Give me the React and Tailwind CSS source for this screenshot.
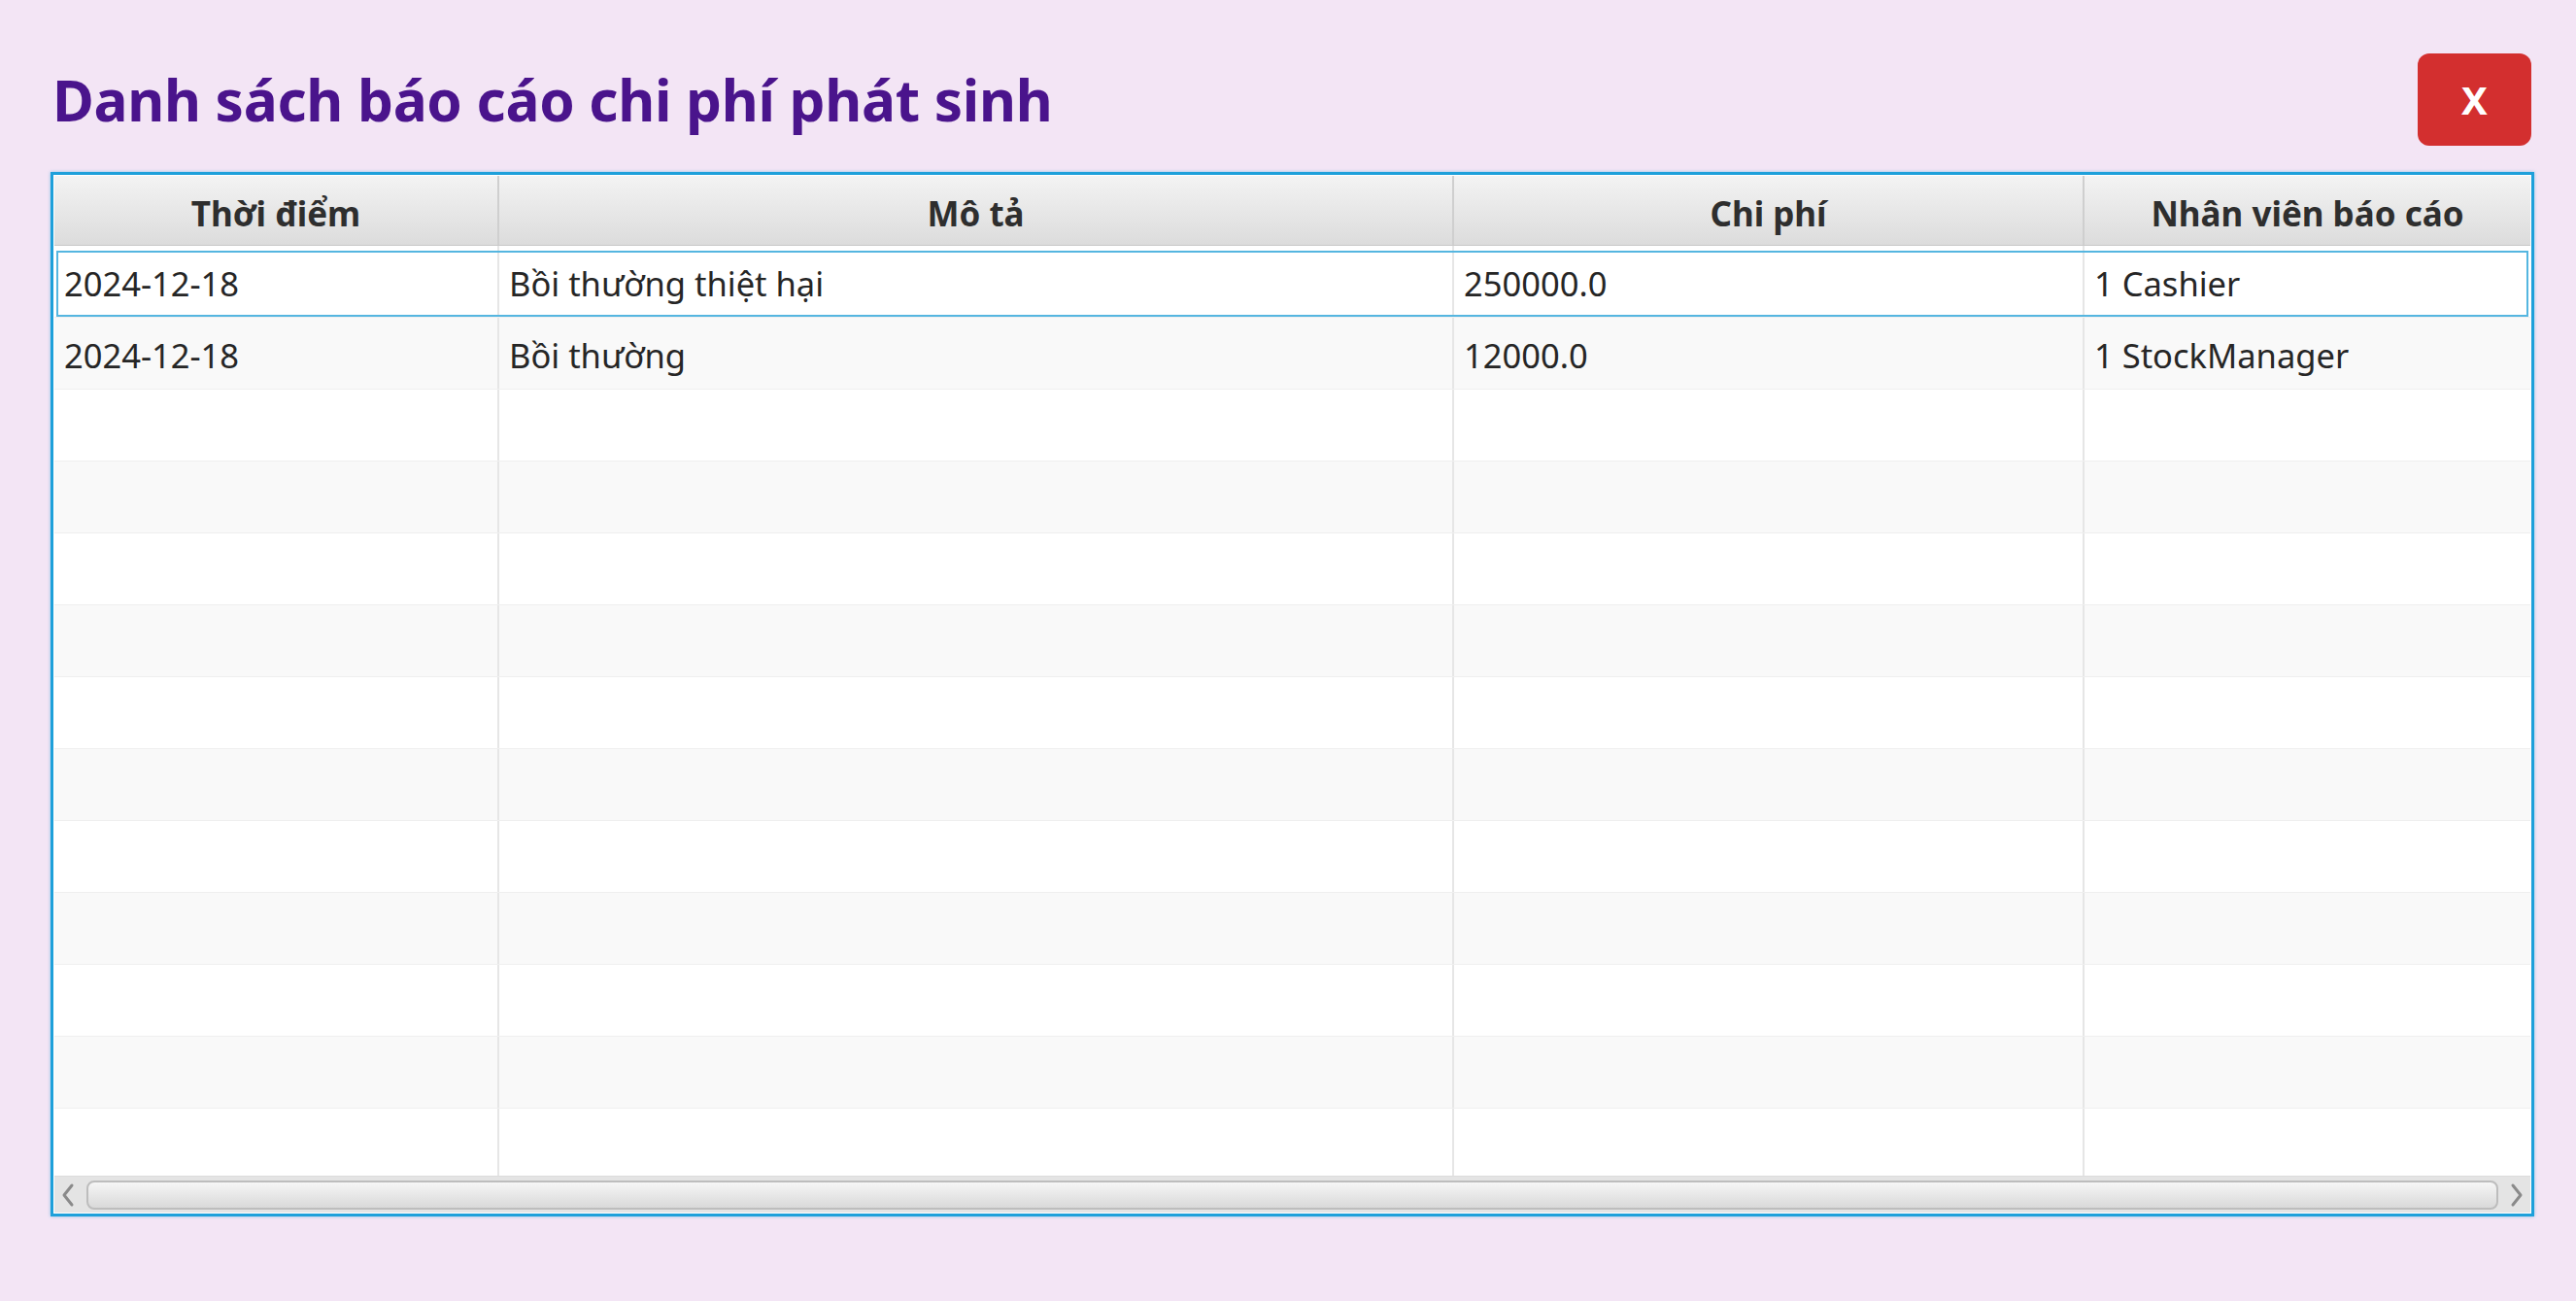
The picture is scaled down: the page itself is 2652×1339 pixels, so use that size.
import React from "react";

const cols = [
  { w: "w-[458px]", title: "Thời điểm" },
  { w: "w-[983px]", title: "Mô tả" },
  { w: "w-[649px]", title: "Chi phí" },
  { w: "flex-1", title: "Nhân viên báo cáo" },
];

const data = [
  ["2024-12-18", "Bồi thường thiệt hại", "250000.0", "1 Cashier"],
  ["2024-12-18", "Bồi thường", "12000.0", "1 StockManager"],
];

export default function App() {
  const rows = Array.from({ length: 13 }, (_, i) => data[i] || null);
  return (
    <div
      className="w-[2652px] h-[1339px] bg-[#f3e5f5] pl-[52px] pr-[43px] pt-[55px]"
      style={{ fontFamily: '"Noto Sans", "Open Sans", sans-serif' }}
    >
      <div className="flex items-center justify-between h-[95px]">
        <h1 className="text-[58.5px] font-bold text-[#4a148c] leading-none pl-[2px] tracking-[-0.3px]">
          Danh sách báo cáo chi phí phát sinh
        </h1>
        <button className="w-[117px] h-[95px] rounded-[12px] bg-[#d32f2f] text-white text-[40px] font-bold flex items-center justify-center mr-[3px]">
          X
        </button>
      </div>

      <div className="mt-[27px] h-[1075px] border-[3px] border-[#1ea0da] bg-white p-px flex flex-col shadow-[0_0_3px_rgba(30,160,218,0.5)]">
        {/* header */}
        <div className="flex h-[72px] border-b border-[#c9c9c9] bg-gradient-to-b from-[#f3f3f3] to-[#dcdcdc]">
          {cols.map((c, i) => (
            <div
              key={i}
              className={`${c.w} flex items-center justify-center pt-[7px] text-[35px] font-bold text-[#2e2e2e] ${
                i < 3 ? "border-r-2 border-[#cfcfcf]" : ""
              }`}
            >
              {c.title}
            </div>
          ))}
        </div>

        {/* body */}
        <div className="flex-1 overflow-hidden">
          {rows.map((r, i) => (
            <div
              key={i}
              className={`relative flex h-[74px] border-b border-[#efefef] ${
                i % 2 === 0 ? "bg-white" : "bg-[#f9f9f9]"
              }`}
            >
              {cols.map((c, j) => (
                <div
                  key={j}
                  className={`${c.w} flex items-center pl-[10px] pt-[4px] text-[34.5px] text-[#262626] ${
                    j < 3 ? "border-r-2 border-[#e6e6e6]" : ""
                  }`}
                >
                  {r ? r[j] : ""}
                </div>
              ))}
              {i === 0 && (
                <div className="absolute left-[2px] right-[2px] top-[5px] bottom-0 border-2 border-[#55b6e0] pointer-events-none" />
              )}
            </div>
          ))}
        </div>

        {/* horizontal scrollbar */}
        <div className="h-[38px] bg-[#e4e4e4] flex items-center px-[3px] gap-[8px] border-t border-[#dcdcdc]">
          <svg width="22" height="28" viewBox="0 0 22 28" className="shrink-0">
            <path d="M15 4 L7 14 L15 24" fill="none" stroke="#8a8a8a" strokeWidth="3" strokeLinecap="round" strokeLinejoin="round" />
          </svg>
          <div className="flex-1 h-[30px] rounded-[8px] border-2 border-[#bdbdbd] bg-gradient-to-b from-[#f6f6f6] to-[#d9d9d9]" />
          <svg width="22" height="28" viewBox="0 0 22 28" className="shrink-0">
            <path d="M7 4 L15 14 L7 24" fill="none" stroke="#8a8a8a" strokeWidth="3" strokeLinecap="round" strokeLinejoin="round" />
          </svg>
        </div>
      </div>
    </div>
  );
}
